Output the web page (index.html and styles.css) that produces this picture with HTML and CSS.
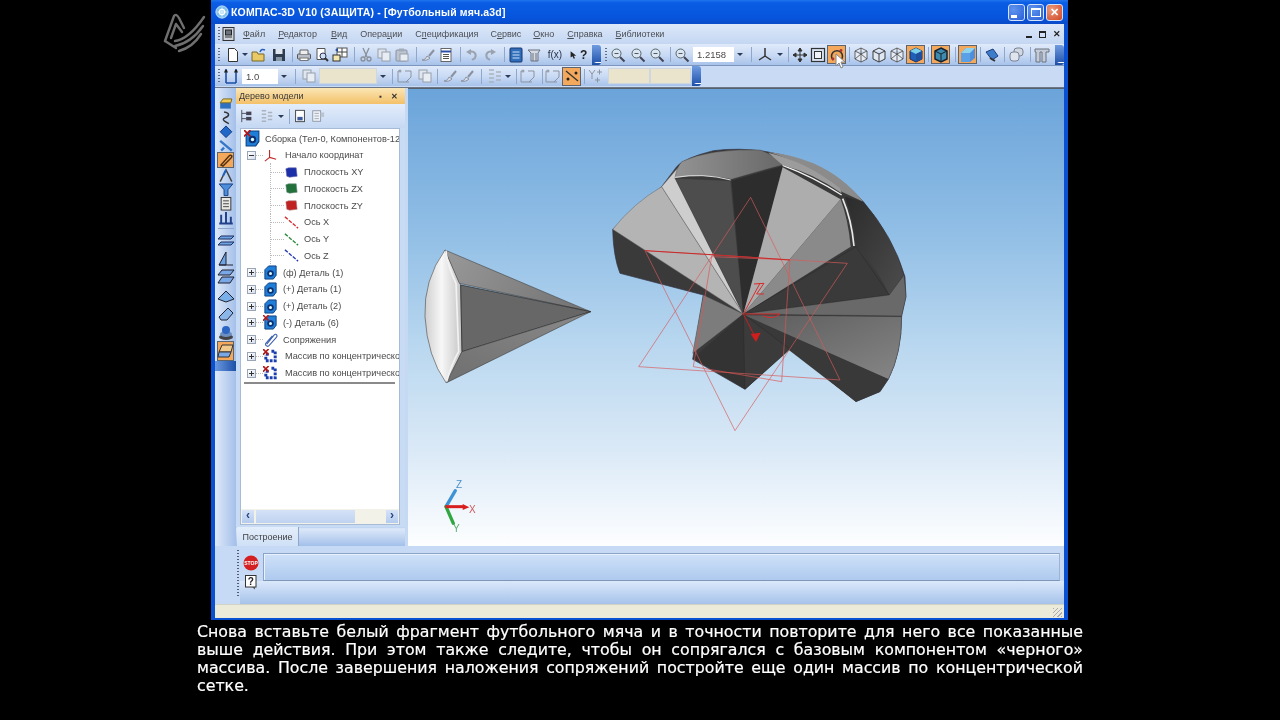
FILE: index.html
```html
<!DOCTYPE html>
<html lang="ru">
<head>
<meta charset="utf-8">
<title>КОМПАС-3D V10</title>
<link rel="stylesheet" href="styles.css">
</head>
<body>
<svg class="sprite" xmlns="http://www.w3.org/2000/svg">
<defs>
<symbol id="new" viewBox="0 0 16 16"><path d="M3.5 1.5h6l3 3v10h-9z" fill="#fff" stroke="#333"/></symbol>
<symbol id="open" viewBox="0 0 16 16"><path d="M1 5h5l1 2h6v7H1z" fill="#e9c866" stroke="#76692c"/><path d="M9 5c1-3 3-3 5-2" fill="none" stroke="#2b5fb5" stroke-width="1.5"/></symbol>
<symbol id="save" viewBox="0 0 16 16"><rect x="2" y="2" width="12" height="12" fill="#2e3c4d"/><rect x="4.500" y="2" width="7" height="5" fill="#dfe6ee"/><rect x="5" y="10" width="6" height="4" fill="#8697a8"/></symbol>
<symbol id="print" viewBox="0 0 16 16"><rect x="1.500" y="7" width="13" height="5" rx="1" fill="#b9bec6" stroke="#555"/><path d="M4 7V3h8v4" fill="#eee" stroke="#666"/><rect x="4" y="11" width="8" height="2.500" fill="#fff" stroke="#777"/></symbol>
<symbol id="prev" viewBox="0 0 16 16"><path d="M3 1.500h8v11H3z" fill="#fff" stroke="#555"/><circle cx="9" cy="9" r="3" fill="#cfe0f2" stroke="#335"/><path d="M11 11l3 3" stroke="#333" stroke-width="2"/></symbol>
<symbol id="setup" viewBox="0 0 16 16"><rect x="5" y="1" width="10" height="9" fill="#fff" stroke="#555"/><path d="M5 5h10M10 1v9" stroke="#444"/><rect x="1" y="8" width="7" height="6" fill="#f4e7b0" stroke="#333"/><path d="M3 3l3-2v4z" fill="#234b9c"/></symbol>
<symbol id="appdoc" viewBox="0 0 16 16"><rect x="2" y="1.500" width="11" height="13" fill="#cfd4dc" stroke="#333"/><rect x="4.500" y="4" width="6" height="5" fill="#6a7280" stroke="#222"/><path d="M4 11h7" stroke="#333"/></symbol>
<symbol id="cut" viewBox="0 0 16 16"><path d="M5 1l4 9M11 1l-4 9" stroke="#8a8f99" stroke-width="1.300" fill="none"/><circle cx="5" cy="12" r="2" fill="none" stroke="#8a8f99" stroke-width="1.300"/><circle cx="11" cy="12" r="2" fill="none" stroke="#8a8f99" stroke-width="1.300"/></symbol>
<symbol id="copy" viewBox="0 0 16 16"><rect x="2" y="2" width="8" height="9" fill="#dfe6f0" stroke="#989faa"/><rect x="6" y="5" width="8" height="9" fill="#e8edf4" stroke="#989faa"/></symbol>
<symbol id="paste" viewBox="0 0 16 16"><rect x="2" y="3" width="11" height="11" rx="1" fill="#bcc4d0" stroke="#8a92a0"/><rect x="6" y="7" width="8" height="7" fill="#e8edf4" stroke="#989faa"/><rect x="5" y="1.500" width="5" height="3" fill="#a2abb8"/></symbol>
<symbol id="brush" viewBox="0 0 16 16"><path d="M2 13c3 0 4-2 5-4l3 2c-2 2-5 3-8 2z" fill="#d8dee8" stroke="#8a92a0"/><path d="M9 9l5-6" stroke="#8a92a0" stroke-width="2"/></symbol>
<symbol id="list" viewBox="0 0 16 16"><rect x="3" y="1.500" width="10" height="13" fill="#fff" stroke="#666"/><path d="M3 4.500h10" stroke="#2c4fa8" stroke-width="2"/><path d="M5 7.500h6M5 9.500h6M5 11.500h6" stroke="#555"/></symbol>
<symbol id="undo" viewBox="0 0 16 16"><path d="M5 5c5-2 8 2 6 6l-3 2" fill="none" stroke="#9aa2ae" stroke-width="2"/><path d="M2 5l5-3v6z" fill="#9aa2ae"/></symbol>
<symbol id="redo" viewBox="0 0 16 16"><path d="M11 5c-5-2-8 2-6 6l3 2" fill="none" stroke="#9aa2ae" stroke-width="2"/><path d="M14 5l-5-3v6z" fill="#9aa2ae"/></symbol>
<symbol id="book" viewBox="0 0 16 16"><rect x="2" y="1" width="12" height="14" rx="1" fill="#2f6dbb" stroke="#16376f"/><path d="M4.500 5h7M4.500 8h7M4.500 11h7" stroke="#cfe2f6"/></symbol>
<symbol id="lib" viewBox="0 0 16 16"><path d="M2 3h12l-2 3v8H5V6z" fill="#d5dbe4" stroke="#6a7280"/><path d="M7 6v8M10 6v8" stroke="#6a7280"/></symbol>
<symbol id="help" viewBox="0 0 16 16"><path d="M1 2v10l3-2 2 4 2-1-2-4h4z" fill="#222"/></symbol>
<symbol id="zoom" viewBox="0 0 16 16"><circle cx="6.500" cy="6.500" r="4.500" fill="#dbe6f3" stroke="#566"/><path d="M10 10l4.500 4.500" stroke="#445" stroke-width="2"/><path d="M4.500 6.500h4" stroke="#556"/></symbol>
<symbol id="axes" viewBox="0 0 16 16"><path d="M8 1v8M8 9l-6 4M8 9l6 4" stroke="#333" stroke-width="1.500" fill="none"/></symbol>
<symbol id="move" viewBox="0 0 16 16"><path d="M8 1v14M1 8h14M8 1L6 4h4zM8 15l-2-3h4zM1 8l3-2v4zM15 8l-3-2v4z" fill="#333" stroke="#333"/></symbol>
<symbol id="box" viewBox="0 0 16 16"><rect x="1.500" y="1.500" width="13" height="13" fill="#d8e3f2" stroke="#333" stroke-width="1.200"/><rect x="4.500" y="4.500" width="7" height="7" fill="#eef3fa" stroke="#333"/></symbol>
<symbol id="rot" viewBox="0 0 16 16"><path d="M4 13a5.500 5.500 0 1 1 8 0" fill="none" stroke="#333" stroke-width="1.600"/><circle cx="4" cy="12" r="1.400" fill="#a33"/><circle cx="12" cy="3.500" r="1.400" fill="#a33"/></symbol>
<symbol id="cube" viewBox="0 0 16 16"><path d="M8 1l6 3v8l-6 3-6-3V4z M2 4l6 3 6-3 M8 7v8" fill="#dfe7f2" stroke="#3c3c3c"/></symbol>
<symbol id="cubew" viewBox="0 0 16 16"><path d="M8 1l6 3v8l-6 3-6-3V4z M2 4l6 3 6-3 M8 7v8 M8 1v6 M2 12l6-5 6 5" fill="#e6ecf5" stroke="#444" stroke-width=".8"/></symbol>
<symbol id="cubeb" viewBox="0 0 16 16"><path d="M8 1l6 3v8l-6 3-6-3V4z" fill="#1f5fb8" stroke="#1a2f60"/><path d="M2 4l6 3 6-3-6-3z" fill="#7ad0e8"/><path d="M8 7v8l6-3V4z" fill="#204f9e"/></symbol>
<symbol id="cubed" viewBox="0 0 16 16"><path d="M8 1l6 3v8l-6 3-6-3V4z" fill="#3e8bb0" stroke="#16222f" stroke-width="1.500"/><path d="M2 4l6 3 6-3" fill="none" stroke="#16222f"/><path d="M8 7v8" stroke="#16222f"/></symbol>
<symbol id="cubes" viewBox="0 0 16 16"><path d="M1 6l5-5h9v10l-5 4H1z" fill="#4d8fdc"/><path d="M1 6h9v9H1z" fill="#5aa0e6"/><path d="M6 1h9L10 6H1z" fill="#8ed3ee"/></symbol>
<symbol id="dish" viewBox="0 0 16 16"><path d="M2 5l7-3 5 7-6 4z" fill="#3d7cc8" stroke="#1c3f80"/><path d="M6 11l5 3" stroke="#333" stroke-width="2"/></symbol>
<symbol id="gear2" viewBox="0 0 16 16"><rect x="6" y="1" width="9" height="8" rx="3" fill="#d0d8e4" stroke="#7a8290"/><rect x="2" y="5" width="9" height="9" rx="3" fill="#dfe5ee" stroke="#7a8290"/></symbol>
<symbol id="col" viewBox="0 0 16 16"><path d="M1 2h14v3h-3v10H8V5H6v10H2V5H1z" fill="#c5ccd7" stroke="#6a7280"/></symbol>
<symbol id="tree" viewBox="0 0 16 16"><path d="M2 1v14M2 5h5M2 11h5" stroke="#445" fill="none"/><rect x="7" y="3" width="6" height="4" fill="#445"/><rect x="7" y="9" width="6" height="4" fill="#445"/></symbol>
<symbol id="lines" viewBox="0 0 16 16"><path d="M2 2h5M2 6h5M2 10h5M2 14h5M9 4h5M9 8h5M9 12h5" stroke="#aab2bf" stroke-width="1.500"/></symbol>
<symbol id="doc" viewBox="0 0 16 16"><rect x="3" y="1.500" width="10" height="13" fill="#fff" stroke="#333"/><rect x="5" y="9" width="6" height="4" fill="#3a5a9c"/></symbol>
<symbol id="docs" viewBox="0 0 16 16"><rect x="2" y="2" width="9" height="12" fill="#eef2f8" stroke="#8a92a0"/><path d="M4 5h5M4 8h5M4 11h5" stroke="#9aa2ae"/><path d="M11 4h4v5h-4z" fill="#b9c3d2"/></symbol>
<symbol id="trig" viewBox="0 0 16 16"><path d="M1 14V3h3M1 14h11M8 3h6v6" fill="none" stroke="#8b93a2"/><circle cx="3" cy="3" r="1.500" fill="#9aa2ae"/><path d="M9 14l5-5" stroke="#8b93a2"/></symbol>
<symbol id="snap" viewBox="0 0 16 16"><path d="M3 1v14M13 1v14M3 15h10" stroke="#1d4fa8" stroke-width="1.600" fill="none"/><path d="M3 4L1 4M3 4h2M13 4h2M13 4h-2" stroke="#333"/><circle cx="3" cy="3" r="1.300" fill="#222"/><circle cx="13" cy="3" r="1.300" fill="#222"/></symbol>
<symbol id="slash" viewBox="0 0 16 16"><path d="M2 3l12 10" stroke="#333" stroke-width="1.300"/><circle cx="4" cy="11" r="1.500" fill="#222"/><circle cx="12" cy="5" r="1.500" fill="#222"/></symbol>
<symbol id="yplus" viewBox="0 0 16 16"><path d="M2 2l3 4 3-4M5 6v5M10 4h5M12.500 1.500v5M8 12h5M10.500 9.500v5" fill="none" stroke="#8b93a2"/></symbol>
<symbol id="part" viewBox="0 0 16 16"><path d="M2 5l4-4h8v10l-3 4H2z" fill="#1f7fd8" stroke="#0c3e80"/><circle cx="8" cy="9" r="3.500" fill="#0e2f70"/><circle cx="8" cy="9" r="1.600" fill="#dff"/></symbol>
<symbol id="partx" viewBox="0 0 16 16"><path d="M2 5l4-4h8v10l-3 4H2z" fill="#1f7fd8" stroke="#0c3e80"/><circle cx="8" cy="9" r="3.500" fill="#0e2f70"/><circle cx="8" cy="9" r="1.600" fill="#dff"/><path d="M0 0l6 6M6 0L0 6" stroke="#b01818" stroke-width="1.600"/></symbol>
<symbol id="clip" viewBox="0 0 16 16"><path d="M4 13L12 3c2-2 4 1 2 3l-8 9c-2 1-4-1-3-3l7-8" fill="none" stroke="#3f62b0" stroke-width="1.200"/></symbol>
<symbol id="arr" viewBox="0 0 16 16"><path d="M3 5.500h4M9 2.500h4v10H3V7" fill="none" stroke="#1b3fae" stroke-width="3.200" stroke-dasharray="3 1.200"/><path d="M0 0l6 6M6 0L0 6" stroke="#b01818" stroke-width="1.700"/></symbol>
<symbol id="origin" viewBox="0 0 16 16"><path d="M7 2v8M7 10l7 2M7 10l-5 4" fill="none" stroke="#c12a2a" stroke-width="1.200"/></symbol>
<symbol id="planeb" viewBox="0 0 16 16"><path d="M2 4l3-1 8 0 1 9-8 1-3-1z" fill="#1b2fa8" stroke="#66a" stroke-width=".6"/></symbol>
<symbol id="planeg" viewBox="0 0 16 16"><path d="M2 4l3-1 8 0 1 9-8 1-3-1z" fill="#22703a" stroke="#687" stroke-width=".6"/></symbol>
<symbol id="planer" viewBox="0 0 16 16"><path d="M2 4l3-1 8 0 1 9-8 1-3-1z" fill="#c02222" stroke="#a77" stroke-width=".6"/></symbol>
<symbol id="axr" viewBox="0 0 16 16"><path d="M1 2l14 12" stroke="#d43030" stroke-width="1.500" stroke-dasharray="4 1.500"/></symbol>
<symbol id="axg" viewBox="0 0 16 16"><path d="M1 2l14 12" stroke="#2d8a3c" stroke-width="1.500" stroke-dasharray="4 1.500"/></symbol>
<symbol id="axb" viewBox="0 0 16 16"><path d="M1 2l14 12" stroke="#2a3cae" stroke-width="1.500" stroke-dasharray="4 1.500"/></symbol>
<symbol id="stop" viewBox="0 0 16 16"><circle cx="8" cy="8" r="7.500" fill="#d42020"/><text x="8" y="10" text-anchor="middle" font-size="5" font-weight="700" fill="#fff" font-family="Liberation Sans">STOP</text></symbol>
<symbol id="q" viewBox="0 0 16 16"><rect x="2.500" y="1.500" width="10.500" height="11.500" fill="#fff" stroke="#333"/><text x="7.800" y="11" text-anchor="middle" font-size="10" font-weight="700" fill="#222" font-family="Liberation Sans">?</text><path d="M9 13l3 2.500v-2.500z" fill="#555"/></symbol>
<symbol id="s1" viewBox="0 0 16 16"><rect x="2" y="7" width="11" height="6" fill="#2f70c0"/><path d="M2 7l3-4h9l-1 4z" fill="#f0cb55" stroke="#7c6920"/></symbol>
<symbol id="s2" viewBox="0 0 16 16"><path d="M6 2c6 1 6 4 1 6s2 5 4 6" fill="none" stroke="#333" stroke-width="1.500"/></symbol>
<symbol id="s3" viewBox="0 0 16 16"><path d="M2 8l6-6 6 6-6 6z" fill="#2067c8" stroke="#123a80"/></symbol>
<symbol id="s4" viewBox="0 0 16 16"><path d="M2 3l12 10M3 13l3-3" stroke="#3476c8" stroke-width="2.400"/></symbol>
<symbol id="s5" viewBox="0 0 16 16"><path d="M3 13l8-9c2-2 4 0 2 2l-8 8z" fill="none" stroke="#57320f" stroke-width="1.500"/></symbol>
<symbol id="s6" viewBox="0 0 16 16"><path d="M2 14L8 2l6 12" fill="none" stroke="#444" stroke-width="1.500"/><path d="M8 2L5 8" stroke="#2060c0" stroke-width="2"/></symbol>
<symbol id="s7" viewBox="0 0 16 16"><path d="M1 2h14l-5 6v6H6V8z" fill="#4c8edb" stroke="#1c3f80"/></symbol>
<symbol id="s8" viewBox="0 0 16 16"><rect x="3" y="1.500" width="10" height="13" fill="#e8e8e4" stroke="#333"/><path d="M5 5h6M5 8h6M5 11h6" stroke="#444"/></symbol>
<symbol id="s9" viewBox="0 0 16 16"><path d="M1 14h14M3 14V5M8 14V2M13 14V7" stroke="#23408a" stroke-width="2"/></symbol>
<symbol id="p1" viewBox="0 0 18 18"><path d="M4 5h13l-3 3H1zM4 11h13l-3 3H1z" fill="#6ea3e4" stroke="#1f2f5f"/></symbol>
<symbol id="p2" viewBox="0 0 18 18"><path d="M2 15L9 2v13z" fill="#6ea3e4" stroke="#223"/><path d="M2 15h14" stroke="#223"/></symbol>
<symbol id="p3" viewBox="0 0 18 18"><path d="M5 2h12l-4 5H1zM5 9h12l-4 6H1z" fill="#7aa8e6" stroke="#223"/></symbol>
<symbol id="p4" viewBox="0 0 18 18"><path d="M1 12L9 4l8 8-8 3z" fill="#7ab0ea" stroke="#223"/></symbol>
<symbol id="p5" viewBox="0 0 18 18"><path d="M2 12l9-9 5 5-6 7H4z" fill="#8ab6ea" stroke="#223"/></symbol>
<symbol id="p6" viewBox="0 0 18 18"><ellipse cx="9" cy="13" rx="7" ry="3" fill="#444"/><ellipse cx="9" cy="10" rx="6" ry="3" fill="#6c8fbf"/><circle cx="9" cy="6" r="4" fill="#2c66c2"/></symbol>
<symbol id="p7" viewBox="0 0 18 18"><path d="M5 3h11l-2 7H2z" fill="#f2c98d" stroke="#333"/><path d="M2 10h12l-2 5H1z" fill="#7aa8e6" stroke="#333"/></symbol>
</defs>
</svg>

<div class="stage">
  <div class="brand">
    <svg class="logo" viewBox="0 0 56 55">
      <g fill="none" stroke="#6f6f6f" stroke-width="2.400" stroke-linejoin="round" stroke-linecap="round">
        <path d="M10 36 L19 11 Q21 8 24 13 L29 23"/>
        <path d="M10 36 L21 43"/>
        <path d="M16 33 L21 19 L27 27"/>
        <path d="M20 36 Q34 34 49 12"/>
        <path d="M20 41 Q36 38 48 21"/>
        <path d="M24 46 Q38 42 46 29"/>
      </g>
    </svg>
  </div>
  <div class="window">
    <header class="titlebar">
      <svg class="appicon" viewBox="0 0 16 16"><circle cx="8" cy="8" r="7" fill="#7fc1ee" stroke="#d8eefb"/><circle cx="8" cy="8" r="3" fill="none" stroke="#fff" stroke-width="1.500"/><path d="M3 8h10M8 3v10" stroke="#fff"/></svg>
      <span class="title">КОМПАС-3D V10 (ЗАЩИТА) - [Футбольный мяч.a3d]</span>
      <div class="wbtns">
        <span class="wbtn"><i class="wmin"></i></span>
        <span class="wbtn"><i class="wmax"></i></span>
        <span class="wbtn wclose">✕</span>
      </div>
    </header>

    <nav class="menubar">
      <i class="grip"></i>
      <svg class="ic mi"><use href="#appdoc"/></svg>
      <span class="menu m1"><u>Ф</u>айл</span>
      <span class="menu m2"><u>Р</u>едактор</span>
      <span class="menu m3"><u>В</u>ид</span>
      <span class="menu m4">Опера<u>ц</u>ии</span>
      <span class="menu m5">С<u>п</u>ецификация</span>
      <span class="menu m6">С<u>е</u>рвис</span>
      <span class="menu m7"><u>О</u>кно</span>
      <span class="menu m8"><u>С</u>правка</span>
      <span class="menu m9"><u>Б</u>иблиотеки</span>
      <span class="mdi"><i class="mdimin"></i><i class="mdimax"></i><span class="mdix">✕</span></span>
    </nav>

    <div class="toolbar tb1">
      <i class="grip"></i>
      <svg class="ic t-first"><use href="#new"/></svg><i class="dd"></i>
      <svg class="ic"><use href="#open"/></svg>
      <svg class="ic ml3 mr0"><use href="#save"/></svg><i class="sep"></i>
      <svg class="ic"><use href="#print"/></svg>
      <svg class="ic"><use href="#prev"/></svg>
      <svg class="ic"><use href="#setup"/></svg><i class="sep"></i>
      <svg class="ic"><use href="#cut"/></svg>
      <svg class="ic"><use href="#copy"/></svg>
      <svg class="ic"><use href="#paste"/></svg><i class="sep"></i>
      <svg class="ic"><use href="#brush"/></svg>
      <svg class="ic"><use href="#list"/></svg><i class="sep"></i>
      <svg class="ic"><use href="#undo"/></svg>
      <svg class="ic"><use href="#redo"/></svg><i class="sep"></i>
      <svg class="ic"><use href="#book"/></svg>
      <svg class="ic"><use href="#lib"/></svg>
      <span class="fx">f(x)</span>
      <span class="helpq"><svg class="ic"><use href="#help"/></svg><b>?</b></span>
      <i class="chev"></i>
      <i class="grip"></i>
      <svg class="ic"><use href="#zoom"/></svg>
      <svg class="ic ml3 mr2"><use href="#zoom"/></svg>
      <svg class="ic mr0"><use href="#zoom"/></svg><i class="sep"></i>
      <svg class="ic"><use href="#zoom"/></svg>
      <span class="field f-zoom">1.2158</span><i class="drop"></i><i class="sep"></i>
      <svg class="ic ml3"><use href="#axes"/></svg><i class="dd far"></i><i class="sep s3"></i>
      <svg class="ic"><use href="#move"/></svg>
      <svg class="ic"><use href="#box"/></svg>
      <span class="on"><svg class="ic"><use href="#rot"/></svg><svg class="cursor" viewBox="0 0 12 16"><path d="M1 1v12l3-3 2 5 2-1-2-5h4z" fill="#fff" stroke="#888"/></svg></span><i class="sep s3"></i>
      <svg class="ic"><use href="#cubew"/></svg>
      <svg class="ic"><use href="#cube"/></svg>
      <svg class="ic"><use href="#cubew"/></svg>
      <span class="on"><svg class="ic"><use href="#cubeb"/></svg></span><i class="sep s3"></i>
      <span class="on"><svg class="ic"><use href="#cubed"/></svg></span><i class="sep"></i>
      <span class="on"><svg class="ic"><use href="#cubes"/></svg></span><i class="sep s3"></i>
      <svg class="ic"><use href="#dish"/></svg><i class="sep s3"></i>
      <svg class="ic"><use href="#gear2"/></svg><i class="sep"></i>
      <svg class="ic"><use href="#col"/></svg>
      <i class="chev chev-end"></i>
    </div>

    <div class="tb2row">
      <div class="toolbar tb2">
        <i class="grip"></i>
        <svg class="ic ml3"><use href="#snap"/></svg>
        <span class="field f-step">1.0</span><i class="drop"></i><i class="sep"></i>
        <svg class="ic ml3"><use href="#copy"/></svg>
        <span class="combo c1"></span><i class="drop"></i><i class="sep s3"></i>
        <svg class="ic ml2"><use href="#trig"/></svg>
        <svg class="ic ml3"><use href="#copy"/></svg><i class="sep s3"></i>
        <svg class="ic ml2"><use href="#brush"/></svg>
        <svg class="ic ml0"><use href="#brush"/></svg><i class="sep"></i>
        <svg class="ic ml3"><use href="#lines"/></svg><i class="dd near"></i><i class="sep s3"></i>
        <svg class="ic"><use href="#trig"/></svg><i class="sep"></i>
        <svg class="ic ml0"><use href="#trig"/></svg>
        <span class="on"><svg class="ic"><use href="#slash"/></svg></span><i class="sep s3"></i>
        <svg class="ic ml0"><use href="#yplus"/></svg>
        <span class="combo c2"></span><span class="combo c3"></span>
        <i class="chev chev-end"></i>
      </div>
    </div>

    <div class="main">
      <aside class="strip">
        <svg class="ic"><use href="#s1"/></svg>
        <svg class="ic"><use href="#s2"/></svg>
        <svg class="ic"><use href="#s3"/></svg>
        <svg class="ic"><use href="#s4"/></svg>
        <span class="on"><svg class="ic"><use href="#s5"/></svg></span>
        <svg class="ic"><use href="#s6"/></svg>
        <svg class="ic"><use href="#s7"/></svg>
        <svg class="ic"><use href="#s8"/></svg>
        <svg class="ic"><use href="#s9"/></svg>
        <i class="hsep"></i>
        <svg class="ic18"><use href="#p1"/></svg>
        <svg class="ic18"><use href="#p2"/></svg>
        <svg class="ic18"><use href="#p3"/></svg>
        <svg class="ic18"><use href="#p4"/></svg>
        <svg class="ic18"><use href="#p5"/></svg>
        <svg class="ic18"><use href="#p6"/></svg>
        <span class="on on-big"><svg class="ic18"><use href="#p7"/></svg></span>
        <i class="strip-chev"></i>
      </aside>

      <section class="panel">
        <div class="phead"><span>Дерево модели</span><span class="pbtns"><b>▪</b><b>✕</b></span></div>
        <div class="ptools">
          <svg class="ic"><use href="#tree"/></svg>
          <svg class="ic ml5"><use href="#lines"/></svg><i class="dd far"></i><i class="sep s3"></i>
          <svg class="ic"><use href="#doc"/></svg>
          <svg class="ic ml3"><use href="#docs"/></svg>
        </div>
        <div class="treebox">
          <div class="tree">
            <div class="row root"><svg class="ic"><use href="#partx"/></svg><span>Сборка (Тел-0, Компонентов-12</span></div>
            <div class="row"><i class="exp minus"></i><i class="hl"></i><svg class="ic"><use href="#origin"/></svg><span class="tx-o">Начало координат</span></div>
            <div class="row kid"><i class="el"></i><svg class="ic"><use href="#planeb"/></svg><span>Плоскость XY</span></div>
            <div class="row kid"><i class="el"></i><svg class="ic"><use href="#planeg"/></svg><span>Плоскость ZX</span></div>
            <div class="row kid"><i class="el"></i><svg class="ic"><use href="#planer"/></svg><span>Плоскость ZY</span></div>
            <div class="row kid"><i class="el"></i><svg class="ic"><use href="#axr"/></svg><span>Ось X</span></div>
            <div class="row kid"><i class="el"></i><svg class="ic"><use href="#axg"/></svg><span>Ось Y</span></div>
            <div class="row kid"><i class="el"></i><svg class="ic"><use href="#axb"/></svg><span>Ось Z</span></div>
            <div class="row"><i class="exp"></i><i class="hl"></i><svg class="ic"><use href="#part"/></svg><span>(ф) Деталь (1)</span></div>
            <div class="row"><i class="exp"></i><i class="hl"></i><svg class="ic"><use href="#part"/></svg><span>(+) Деталь (1)</span></div>
            <div class="row"><i class="exp"></i><i class="hl"></i><svg class="ic"><use href="#part"/></svg><span>(+) Деталь (2)</span></div>
            <div class="row"><i class="exp"></i><i class="hl"></i><svg class="ic"><use href="#partx"/></svg><span>(-) Деталь (6)</span></div>
            <div class="row"><i class="exp"></i><i class="hl"></i><svg class="ic"><use href="#clip"/></svg><span>Сопряжения</span></div>
            <div class="row"><i class="exp"></i><i class="hl"></i><svg class="ic"><use href="#arr"/></svg><span class="tx-a">Массив по концентрическо</span></div>
            <div class="row"><i class="exp"></i><i class="hl"></i><svg class="ic"><use href="#arr"/></svg><span class="tx-a">Массив по концентрическо</span></div>
          </div>
          <div class="hscroll"><i class="sb">‹</i><i class="thumb"></i><i class="track"></i><i class="sb">›</i></div>
        </div>
        <div class="tabs"><span class="tab">Построение</span></div>
      </section>

      <section class="viewport">
        <svg class="scene" viewBox="408 88 656 458">
          <defs>
            <linearGradient id="gCap" x1="0" y1="0" x2="1" y2="0"><stop offset="0" stop-color="#cfcfcf"/><stop offset=".45" stop-color="#f7f7f7"/><stop offset="1" stop-color="#c4c4c4"/></linearGradient>
            <linearGradient id="gTop" x1="0" y1="0" x2="1" y2="0.3"><stop offset="0" stop-color="#999"/><stop offset="1" stop-color="#777"/></linearGradient>
            <linearGradient id="gBot" x1="0" y1="1" x2="1" y2="0"><stop offset="0" stop-color="#6f6f6f"/><stop offset="1" stop-color="#8a8a8a"/></linearGradient>
            <linearGradient id="gHat" x1="0" y1="0" x2="1" y2="0"><stop offset="0" stop-color="#939393"/><stop offset="1" stop-color="#686868"/></linearGradient>
            <linearGradient id="gRcap" x1="0" y1="0" x2="1" y2="1"><stop offset="0" stop-color="#2b2b2b"/><stop offset="1" stop-color="#4c4c4c"/></linearGradient>
            <linearGradient id="gLow" x1="0" y1="0" x2="1" y2="1"><stop offset="0" stop-color="#5c5c5c"/><stop offset="1" stop-color="#868686"/></linearGradient>
          </defs>
          <g transform="translate(420 240) scale(.3333)" stroke-linejoin="round">
            <path d="M75 30 Q10 120 15 230 Q22 350 78 428 L126 335 L122 135 Z" fill="url(#gCap)" stroke="#555" stroke-width="2"/>
            <path d="M75 30 L512 215 L118 130 Z" fill="url(#gTop)" stroke="#333" stroke-width="1.500"/>
            <path d="M122 135 L512 215 L126 335 Z" fill="#676767" stroke="#222" stroke-width="2"/>
            <path d="M126 335 L512 215 L80 428 Z" fill="url(#gBot)" stroke="#333" stroke-width="1.500"/>
            <path d="M78 32 Q80 70 108 130 L116 335 Q95 370 80 425" fill="none" stroke="#f2f2f2" stroke-width="5"/>
          </g>
          <g transform="translate(600 140) scale(.3333)" stroke-linejoin="round">
            <path d="M500 35 Q620 55 700 110 Q760 150 790 185 Q880 290 915 410 L918 470 L905 528 Q905 640 865 718 L840 755 L768 785 L570 625 L435 748 L278 658 L310 465 L60 400 Q40 350 38 268 L185 140 L230 80 Q250 55 340 32 Q420 22 500 35 Z" fill="#3a3a3a" stroke="#334" stroke-width="2"/>
            <path d="M38 268 Q100 190 185 140 L430 522 Z" fill="#b4b4b4" stroke="#666" stroke-width="1.500"/>
            <path d="M185 140 L240 76 L226 115 L430 522 Z" fill="#cecece" stroke="#666" stroke-width="1.500"/>
            <path d="M225 115 L392 122 L430 522 Z" fill="#4d4d4d" stroke="#333"/>
            <path d="M395 122 L548 78 L430 522 Z" fill="#2d2d2d"/>
            <path d="M225 115 Q228 85 245 65 Q330 25 480 30 Q525 45 548 75 Q470 95 395 118 Q310 100 225 115 Z" fill="url(#gHat)" stroke="#333"/>
            <path d="M225 112 Q310 98 392 120" fill="none" stroke="#ddd" stroke-width="3"/>
            <path d="M505 36 Q620 70 725 155 L790 185 Q730 110 640 70 Q570 42 505 36 Z" fill="#8b8b8b"/>
            <path d="M548 76 Q640 110 725 165" fill="none" stroke="#f2f2f2" stroke-width="4"/>
            <path d="M505 38 L548 76 Q640 100 725 160 L720 145 Q620 65 505 38 Z" fill="#9c9c9c"/>
            <path d="M548 82 L722 178 L430 522 Z" fill="#adadad"/>
            <path d="M722 178 Q745 240 752 320 L430 522 Z" fill="#8a8a8a"/>
            <path d="M728 176 Q755 240 762 318" fill="none" stroke="#e8e8e8" stroke-width="5"/>
            <path d="M735 170 L790 185 Q880 290 910 405 L868 465 Q830 380 768 318 Q760 240 735 170 Z" fill="url(#gRcap)"/>
            <path d="M768 320 L868 465 L430 522 Z" fill="#3a3a3a" stroke="#222"/>
            <path d="M868 465 L912 405 L918 470 L905 528 L430 522 Z" fill="#696969" stroke="#333"/>
            <path d="M430 525 L905 530 Q905 640 865 718 Z" fill="url(#gLow)" stroke="#333"/>
            <path d="M430 525 L865 718 L840 755 L768 785 Z" fill="#393939"/>
            <path d="M430 522 L310 465 L278 640 Z" fill="#7c7c7c" stroke="#444"/>
            <path d="M430 522 L280 655 L435 748 Z" fill="#333"/>
            <path d="M430 522 L435 748 L570 628 Z" fill="#3b3b3b" stroke="#222"/>
            <g fill="none" stroke-width="2">
              <path d="M452 172 L720 720 L116 680 Z" stroke="#d85a5a"/>
              <path d="M135 332 L742 370 L405 872 Z" stroke="#d85a5a"/>
              <path d="M335 350 L570 360 L545 725 L280 680 Z" stroke="#d55"/>
            </g>
            <path d="M135 332 L350 345 L570 360" fill="none" stroke="#c72a2a" stroke-width="3"/>
            <path d="M430 522 L480 430 M462 432 L492 430 L470 462 L492 462" fill="none" stroke="#d92a2a" stroke-width="3"/>
            <path d="M430 522 L540 522 Q520 540 490 528" fill="none" stroke="#d92a2a" stroke-width="3"/>
            <path d="M430 522 L465 590" stroke="#c81e1e" stroke-width="3"/>
            <path d="M452 582 L482 578 L468 606 Z" fill="#d01e1e"/>
          </g>
          <g transform="translate(430 470) scale(.3333)">
            <path d="M48 110 L76 62" stroke="#3f93d5" stroke-width="10" stroke-linecap="round"/>
            <path d="M48 110 L70 160" stroke="#2fa640" stroke-width="10" stroke-linecap="round"/>
            <path d="M46 110 H100" stroke="#d81e1e" stroke-width="9"/>
            <path d="M98 102 L118 112 L98 120 Z" fill="#d81e1e"/>
          </g>
          <text class="ax ax-z" x="456" y="488">Z</text>
          <text class="ax ax-x" x="469" y="513">X</text>
          <text class="ax ax-y" x="453" y="532">Y</text>
        </svg>
      </section>
    </div>

    <div class="cmd">
      <div class="cmd-left">
        <i class="vgrip"></i>
        <div class="cmd-icons">
          <svg class="ic"><use href="#stop"/></svg>
          <svg class="ic"><use href="#q"/></svg>
        </div>
      </div>
      <div class="cmd-right">
        <div class="cmd-field"></div>
        <div class="cmd-under"></div>
      </div>
    </div>
    <footer class="status"><i class="resize"></i></footer>
  </div>
</div>

<p class="caption">
  <span class="ln">Снова вставьте белый фрагмент футбольного мяча и в точности повторите для него все показанные</span>
  <span class="ln">выше действия. При этом также следите, чтобы он сопрягался с базовым компонентом «черного»</span>
  <span class="ln">массива. После завершения наложения сопряжений постройте еще один массив по концентрической</span>
  <span class="ln last">сетке.</span>
</p>
</body>
</html>
```
FILE: styles.css
```css
* { box-sizing: border-box; }
html, body { margin: 0; padding: 0; }
body { width: 1280px; height: 720px; overflow: hidden; background: #000; font-family: "Liberation Sans", Arial, sans-serif; }
.sprite { display: none; }
i { display: block; font-style: normal; }

.stage { display: flex; height: 620px; }
.brand { width: 211px; padding: 5px 0 0 155px; flex: none; }
.logo { width: 56px; height: 55px; display: block; }

.window { width: 857px; height: 620px; display: flex; flex-direction: column; background: #0a50d2; border-radius: 4px 4px 0 0; padding: 0 4px 2px; filter: blur(.35px); }

.titlebar { height: 24px; margin: 0 -4px; padding: 0 5px 0 4px; display: flex; align-items: center; flex: none; background: linear-gradient(#1f74ee 0, #0a5de4 12%, #0754dc 75%, #0a4bc8 100%); }
.appicon { width: 14px; height: 14px; flex: none; }
.title { margin-left: 2px; color: #fff; font-size: 10.500px; font-weight: 700; letter-spacing: .15px; white-space: nowrap; }
.wbtns { margin-left: auto; display: flex; gap: 2px; }
.wbtn { width: 17px; height: 17px; border: 1px solid #d5e2f8; border-radius: 3px; background: radial-gradient(circle at 30% 30%, #5f94ee, #2a5fd8); display: flex; align-items: center; justify-content: center; position: relative; }
.wclose { background: radial-gradient(circle at 30% 30%, #ec9a7d, #cf4726); color: #fff; font-size: 11px; font-weight: 700; }
.wmin { width: 6px; height: 3px; background: #fff; margin: 8px 6px 0 0; }
.wmax { width: 10px; height: 9px; border: 1px solid #fff; border-top-width: 2px; }

.menubar { height: 20px; flex: none; display: flex; align-items: center; background: linear-gradient(#dde8f9, #c3d6f2); color: #4b4f55; font-size: 9px; position: relative; padding-left: 3px; }
.grip { width: 2px; height: 14px; flex: none; background: repeating-linear-gradient(#5e6c86 0 1px, transparent 1px 3px); }
.mi { margin-left: 2px; }
.menu { white-space: nowrap; }
.m1 { margin-left: 5px; }
.m2 { margin-left: 13px; }
.m3 { margin-left: 14px; }
.m4 { margin-left: 13px; }
.m5 { margin-left: 13px; }
.m6 { margin-left: 12px; }
.m7 { margin-left: 12px; }
.m8 { margin-left: 13px; }
.m9 { margin-left: 13px; }
.mdi { margin-left: auto; margin-right: 3px; display: flex; align-items: center; gap: 7px; color: #222; }
.mdimin { width: 6px; height: 2px; background: #222; margin-top: 5px; }
.mdimax { width: 7px; height: 7px; border: 1px solid #222; border-top-width: 2px; }
.mdix { font-size: 9px; font-weight: 700; }

.toolbar { display: flex; align-items: center; padding-left: 3px; background: linear-gradient(#e0eafa, #c7d9f4 55%, #a7c2ea); }
.tb1 { height: 22px; flex: none; border-bottom: 1px solid #7d96be; }
.tb2row { height: 22px; flex: none; background: #c9dbf4; border-bottom: 1px solid #6c7686; }
.tb2 { width: 486px; height: 20px; border-radius: 0 3px 3px 0; }

.ic { width: 16px; height: 16px; flex: none; display: block; margin: 0 1px; }
.ic18 { width: 18px; height: 18px; flex: none; display: block; }
.t-first { margin-left: 5px; }
.ml0 { margin-left: 0; }
.ml2 { margin-left: 2px; }
.ml3 { margin-left: 3px; }
.ml5 { margin-left: 5px; }
.mr0 { margin-right: 0; }
.mr2 { margin-right: 2px; }
.dd { width: 0; height: 0; border: 3px solid transparent; border-top: 3px solid #2b3c5a; border-bottom: 0; margin: 0 2px 0 0; flex: none; }
.far { margin-left: 3px; }
.near { margin-left: 1px; }
.sep { width: 1px; height: 15px; background: #8fa7ca; margin: 0 2px 0 5px; flex: none; }
.s3 { margin-left: 3px; }
.fx { width: 18px; color: #2a3347; font-size: 10px; text-align: center; margin-left: 3px; }
.helpq { display: flex; align-items: center; width: 22px; margin-left: 6px; font-size: 12px; color: #222; }
.helpq .ic { width: 10px; margin: 0; }
.chev { width: 9px; height: 20px; flex: none; background: linear-gradient(#6f9be0, #1d4fa8); border-radius: 0 3px 3px 0; position: relative; }
.chev::after { content: ""; position: absolute; left: 2px; bottom: 2px; width: 5px; height: 3px; border-bottom: 1px solid #fff; border-left: 2px solid transparent; }
.chev + .grip { margin-left: 4px; margin-right: 2px; }
.chev-end { margin-left: auto; }
.field { background: #fff; color: #4a4a4a; font-size: 9.500px; display: flex; align-items: center; padding-left: 4px; height: 15px; flex: none; }
.f-zoom { width: 41px; margin-left: 2px; }
.f-step { width: 36px; margin-left: 2px; }
.drop { width: 12px; height: 15px; flex: none; background: linear-gradient(#dce7f8, #b3c9ea); position: relative; }
.drop::after { content: ""; position: absolute; left: 3px; top: 6px; border: 3px solid transparent; border-top: 3px solid #2b3c5a; border-bottom: 0; }
.on { display: flex; align-items: center; justify-content: center; width: 19px; height: 19px; flex: none; background: #f4a85c; border: 1px solid #5c6470; position: relative; }
.on .ic { margin: 0; }
.cursor { width: 12px; height: 16px; position: absolute; left: 7px; top: 7px; }
.combo { background: #eae4cd; height: 16px; flex: none; border: 1px solid #cfd6de; }
.c1 { width: 58px; margin-left: 1px; }
.c2 { width: 42px; margin-left: 4px; }
.c3 { width: 41px; }

.main { height: 458px; flex: none; display: flex; background: #c5d9f3; }
.strip { width: 21px; flex: none; display: flex; flex-direction: column; align-items: center; padding-top: 8px; gap: 0; background: linear-gradient(90deg, #dfe9fa, #a4c0e9); }
.strip > .ic { margin: 0 0 -1.500px; height: 15.500px; }
.strip > .on { width: 17px; height: 16px; }
.strip > .ic18 { margin-bottom: .5px; }
.hsep { width: 16px; height: 1px; background: #8fa7ca; margin: 4px 0 2px; flex: none; }
.strip > .on-big { height: 20px; margin-top: -1px; }
.strip-chev { width: 21px; height: 10px; background: linear-gradient(90deg, #6c9ae0, #1d4fa8); }

.panel { width: 169px; flex: none; display: flex; flex-direction: column; background: #c8dbf4; }
.phead { height: 16px; flex: none; display: flex; align-items: center; justify-content: space-between; background: linear-gradient(#fbe6b5, #f3c169); color: #3a3a3a; font-size: 9px; padding: 0 7px 0 3px; }
.pbtns { display: flex; gap: 9px; font-size: 8px; color: #333; }
.ptools { height: 24px; flex: none; display: flex; align-items: center; padding-left: 3px; background: linear-gradient(#e3edfb, #c5d8f3); }
.ptools .ic { width: 14px; height: 14px; }
.treebox { margin: 0 5px 0 4px; height: 397px; flex: none; background: #fff; border: 1px solid #a7bad6; display: flex; flex-direction: column; justify-content: space-between; }
.tree { color: #4a4a4a; font-size: 9.200px; padding: 1px 0 0; width: 158px; overflow: hidden; }
.tree::after { content: ""; display: block; height: 2px; background: #8a8a8a; margin: 0 3px; width: 151px; }
.row { height: 16.750px; display: flex; align-items: center; white-space: nowrap; }
.row .ic { width: 15px; height: 15px; margin: 0; }
.root { padding-left: 3px; height: 17px; }
.root .ic { width: 17px; height: 17px; }
.row.root > span { margin-left: 4px; }
.exp { width: 9px; height: 9px; margin-left: 6px; border: 1px solid #9aa5b5; flex: none; background: linear-gradient(135deg, #fff, #d7dfeb); position: relative; }
.exp::before { content: ""; position: absolute; left: 1px; right: 1px; top: 3px; height: 1px; background: #333; }
.exp::after { content: ""; position: absolute; top: 1px; bottom: 1px; left: 3px; width: 1px; background: #333; }
.minus::after { display: none; }
.hl { width: 7px; border-top: 1px dotted #bbb; flex: none; }
.row > span { margin-left: 5px; }
.row > .tx-o { margin-left: 7px; }
.row > .tx-a { margin-left: 7px; }
.kid { padding-left: 29px; position: relative; }
.kid::before { content: ""; position: absolute; left: 29px; top: -1px; bottom: 0; border-left: 1px dotted #bbb; }
.el { width: 14px; border-top: 1px dotted #bbb; flex: none; }
.row.kid > span { margin-left: 5px; }
.hscroll { height: 15px; flex: none; display: flex; background: #f3f2e8; padding: 1px; }
.sb { width: 12px; flex: none; background: linear-gradient(#d6e3f7, #b4cbee); color: #27447e; font-size: 12px; font-weight: 700; line-height: 11px; text-align: center; }
.thumb { width: 99px; background: linear-gradient(#d5e2f7, #bed2f0); margin-left: 2px; }
.track { flex: 1; }
.tabs { height: 19px; flex: none; margin-top: 2px; display: flex; background: linear-gradient(#b7cff0, #dce8f9 10%, #a3c0ea); }
.tab { width: 62px; margin-left: 1px; background: linear-gradient(#e4eefb, #cfe0f6); color: #3f3f3f; font-size: 9px; display: flex; align-items: center; justify-content: center; border-right: 1px solid #8ea6c8; }

.viewport { width: 656px; margin-left: 3px; flex: none; background: linear-gradient(#6ba4da 0, #8fbde5 30%, #b7d6ef 55%, #dceaf7 80%, #fdfeff 100%); border-top: 1px solid #56616e; }
.scene { display: block; width: 656px; height: 458px; margin-top: -1px; }
.ax { font-family: "Liberation Sans", Arial, sans-serif; font-size: 10px; }
.ax-z { fill: #4a90c8; }
.ax-x { fill: #cc5a5a; }
.ax-y { fill: #5aae6a; }

.cmd { height: 58px; flex: none; display: flex; background: #c6daf5; padding-top: 2px; }
.cmd-left { width: 48px; flex: none; display: flex; padding: 5px 0 0 22px; gap: 3px; position: relative; z-index: 1; }
.vgrip { width: 2px; height: 46px; background: repeating-linear-gradient(#4f5d78 0 1px, transparent 1px 3px); flex: none; margin-top: -3px; }
.cmd-icons { width: 20px; display: flex; flex-direction: column; gap: 3px; margin-top: 2px; }
.cmd-right { flex: 1; display: flex; flex-direction: column; padding-right: 4px; }
.cmd-field { height: 28px; margin-top: 5px; background: linear-gradient(#cfe1f9, #aecaee); border: 1px solid #8ba3c6; border-right-color: #9db3d3; border-bottom-color: #7f96b8; box-shadow: inset 1px 1px 0 #e8f1fc; }
.cmd-under { flex: 1; margin-right: -4px; margin-left: -23px; background: linear-gradient(#dbe8fb, #a6c3ea); }
.status { height: 14px; flex: none; background: #ecebd9; border-top: 1px solid #cfd2c5; position: relative; }
.resize { position: absolute; right: 2px; bottom: 1px; width: 9px; height: 9px; background: repeating-linear-gradient(135deg, #aab 0 1px, transparent 1px 3px); }

.caption { margin: 3px 0 0 197px; width: 886px; color: #fff; font-family: "DejaVu Sans", sans-serif; font-size: 15.800px; line-height: 18px; filter: blur(.3px); -webkit-text-stroke: .2px #fff; }
.ln { display: block; text-align: justify; text-align-last: justify; white-space: nowrap; }
.last { text-align: left; text-align-last: left; }
```
